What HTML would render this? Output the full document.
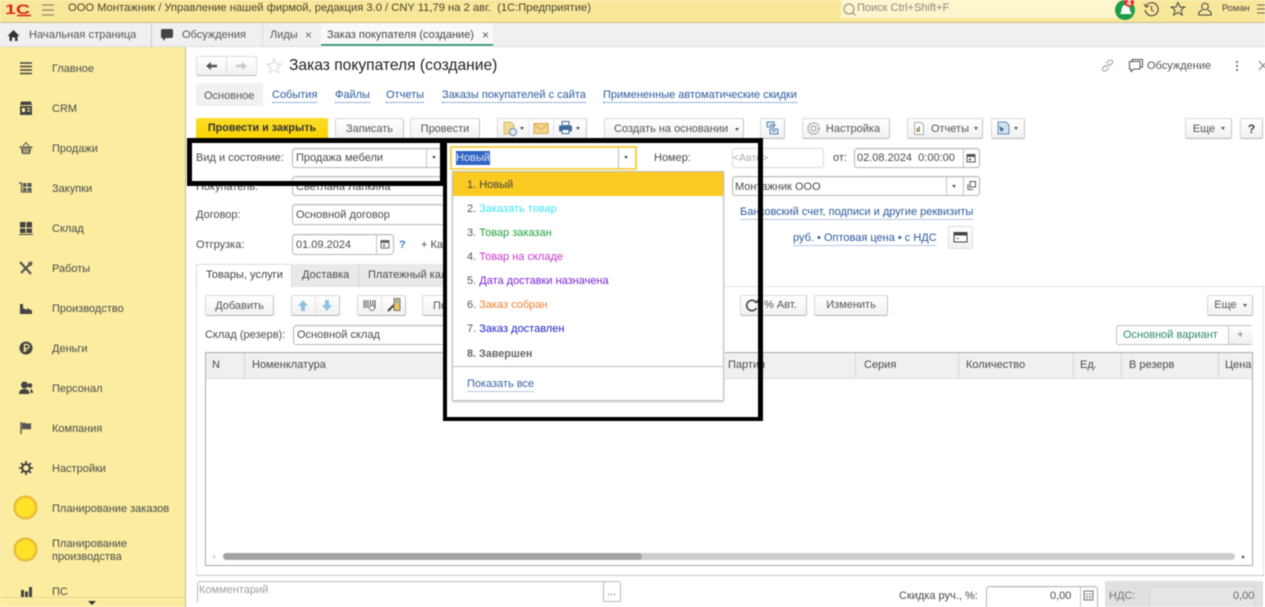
<!DOCTYPE html>
<html lang="ru"><head><meta charset="utf-8"><title>Заказ покупателя</title>
<style>
html,body{margin:0;padding:0;width:1265px;height:607px;overflow:hidden;background:#fff}
body{position:relative;font-family:"Liberation Sans",Arial,sans-serif;font-size:11px;color:#4a4a4a}
#w{position:absolute;left:0;top:0;width:1265px;height:607px;overflow:hidden;filter:blur(.4px)}
.a,.t,.f,.b,svg{position:absolute}
.t{white-space:nowrap;line-height:14px;height:14px;margin-top:1px}
.f{box-sizing:border-box;border:1px solid #b8b8b8;border-radius:3px;background:#fff;box-shadow:inset 0 1px 1px #eee}
.b{box-sizing:border-box;border:1px solid #d8d8d8;border-bottom-color:#b5b5b5;border-right-color:#c4c4c4;border-radius:2px;background:linear-gradient(#fff,#f1f1f1);text-align:center;line-height:20px;color:#555;white-space:nowrap}
.v{position:absolute;width:1px;background:#c4c4c4}
.l{color:#2a5a9e;border-bottom:1px dotted #3a6ab0;height:13px;line-height:13px}
.u{color:#2a5a9e;border-bottom:1px solid #b7c6e0;height:13px;line-height:13px}
.k{position:absolute;background:#000}
.ar{position:absolute;width:0;height:0;border-left:2.5px solid transparent;border-right:2.5px solid transparent;border-top:3px solid #555}
.d{position:absolute;left:467px;white-space:nowrap;line-height:14px;color:#555;margin-top:1px;font-size:11px}
</style></head><body><div id="w">

<!-- top bar -->
<div class="a" style="left:0;top:0;width:1265px;height:22px;background:#f9e799;border-bottom:1px solid #c9bd86"></div>
<svg style="left:4px;top:1px" width="28" height="18"><text x="1" y="13" font-size="14" font-weight="bold" fill="#d8281c" font-family="Liberation Sans" textLength="25" lengthAdjust="spacingAndGlyphs">1С</text><path d="M13 14.500H27" stroke="#d8281c" stroke-width="1.600"/></svg>
<svg style="left:41px;top:3px" width="14" height="14"><path d="M1 2H13M1 7H13M1 12H13" stroke="#8a8a70" stroke-width="1.300"/></svg>
<div class="t" style="left:68px;top:0;font-size:11.200px;color:#45452f">ООО Монтажник / Управление нашей фирмой, редакция 3.0 / CNY 11,79 на 2 авг.&nbsp; (1С:Предприятие)</div>
<div class="a" style="left:841px;top:0;width:278px;height:18px;background:#fdf5cb"></div>
<svg style="left:842px;top:2px" width="15" height="15"><circle cx="7" cy="7" r="5" fill="none" stroke="#888" stroke-width="1"/><path d="M10.500 10.500L13.500 13.500" stroke="#888"/></svg>
<div class="t" style="left:857px;top:0;color:#888">Поиск Ctrl+Shift+F</div>
<svg style="left:1113px;top:-2px" width="28" height="24"><circle cx="12" cy="12" r="10" fill="#1f9e4a"/><path d="M7 16c2-2 1-6 3-8 2-2 5-1 6 1 1 2 1 5 3 7z" fill="#fff"/><circle cx="16" cy="4" r="5" fill="#e2332b"/><text x="13.700" y="7.500" font-size="8" font-weight="bold" fill="#fff" font-family="Liberation Sans">4</text></svg>
<svg style="left:1143px;top:1px" width="17" height="17"><path d="M3 5A6.500 6.500 0 1 1 2.200 9" fill="none" stroke="#444" stroke-width="1.100"/><path d="M1 3L3 6L6 5" fill="none" stroke="#444"/><path d="M8.500 5V9L11 10.500" fill="none" stroke="#444"/></svg>
<svg style="left:1170px;top:1px" width="16" height="16"><path d="M8 1.500L10 6H14.700L11 9L12.300 14L8 11.300L3.700 14L5 9L1.300 6H6Z" fill="none" stroke="#444"/></svg>
<svg style="left:1197px;top:1px" width="17" height="17"><circle cx="8" cy="5.500" r="3.300" fill="none" stroke="#444"/><path d="M1.500 14c0-4 3-4.500 4-5M14.500 14c0-4-3-4.500-4-5M1.500 14H14.500" fill="none" stroke="#444"/></svg>
<div class="t" style="left:1222px;top:0;font-size:9.300px;color:#444">Роман</div>
<svg style="left:1257px;top:3px" width="8" height="12"><path d="M0 2H8M0 6H8M0 10H8" stroke="#666"/></svg>

<!-- tabs -->
<div class="a" style="left:0;top:23px;width:1265px;height:24px;background:#f0f0f0;border-bottom:1px solid #ddd;box-sizing:border-box"></div>
<div class="a" style="left:151px;top:23px;width:1px;height:24px;background:#c9c9c9"></div>
<div class="a" style="left:262px;top:23px;width:1px;height:24px;background:#dcdcdc"></div>
<div class="a" style="left:321px;top:23px;width:172px;height:24px;background:#f9f9f9"></div>
<div class="a" style="left:321px;top:44px;width:172px;height:2px;background:#3f9c78"></div>
<svg style="left:6px;top:28px" width="15" height="15"><path d="M1.500 8L7.500 2L13.500 8H11.500V13H9V9.500H6V13H3.500V8Z" fill="#333"/></svg>
<div class="t" style="left:29px;top:27px;color:#555;font-size:11.100px">Начальная страница</div>
<svg style="left:159px;top:27px" width="16" height="16"><path d="M3 2H13a2 2 0 0 1 1 1V9a2 2 0 0 1-2 2H7L4 14V11H3A1 1 0 0 1 2 10V3Z" fill="#444"/></svg>
<div class="t" style="left:182px;top:27px;color:#555">Обсуждения</div>
<div class="t" style="left:270px;top:27px;color:#555">Лиды</div>
<div class="t" style="left:305px;top:27px;color:#666;font-size:12px">×</div>
<div class="t" style="left:327px;top:27px;color:#444;font-size:11px">Заказ покупателя (создание)</div>
<div class="t" style="left:482px;top:27px;color:#555;font-size:12px">×</div>

<!-- sidebar -->
<div class="a" style="left:0;top:47px;width:185px;height:560px;background:#fbec9f;border-right:1px solid #b9b9a9"></div>
<div class="a" style="left:0;top:597px;width:185px;height:1px;background:#e5d68e"></div>
<div class="a" style="left:88px;top:601px;width:0;height:0;border-left:4px solid transparent;border-right:4px solid transparent;border-top:4px solid #333"></div>
<div class="t" style="left:52px;top:61px">Главное</div>
<div class="t" style="left:52px;top:101px">CRM</div>
<div class="t" style="left:52px;top:141px">Продажи</div>
<div class="t" style="left:52px;top:181px">Закупки</div>
<div class="t" style="left:52px;top:221px">Склад</div>
<div class="t" style="left:52px;top:261px">Работы</div>
<div class="t" style="left:52px;top:301px">Производство</div>
<div class="t" style="left:52px;top:341px">Деньги</div>
<div class="t" style="left:52px;top:381px">Персонал</div>
<div class="t" style="left:52px;top:421px">Компания</div>
<div class="t" style="left:52px;top:461px">Настройки</div>
<div class="t" style="left:52px;top:501px">Планирование заказов</div>
<div class="t" style="left:52px;top:536px">Планирование</div>
<div class="t" style="left:52px;top:549px">производства</div>
<div class="t" style="left:52px;top:584px">ПС</div>
<svg style="left:18px;top:60px" width="16" height="16"><path d="M2 3H14M2 6.500H14M2 10H14M2 13.500H14" stroke="#444" stroke-width="1.600"/></svg>
<svg style="left:18px;top:100px" width="16" height="16"><path d="M3 1.500H13L14 5H2Z" fill="#444"/><rect x="2" y="6" width="12" height="9" fill="#444"/><rect x="4" y="8" width="3" height="4" fill="#fbec9f"/><path d="M9 8.500H12.500M9 11H12.500" stroke="#fbec9f"/></svg>
<svg style="left:18px;top:140px" width="16" height="16"><path d="M1.500 6.500H14.500V8H1.500ZM3 8.500H13L12 14H4Z" fill="#555"/><path d="M5 6L8 2.500L11 6" fill="none" stroke="#555"/><path d="M6 9V13M8 9V13M10 9V13" stroke="#fbec9f"/></svg>
<svg style="left:18px;top:180px" width="16" height="16"><path d="M1 3H3.500V12H14" fill="none" stroke="#555" stroke-width="1.200"/><path d="M5 3H8.500V7H5ZM9.500 3H13.500V7H9.500ZM5 8H8.500V11H5ZM9.500 8H13.500V11H9.500Z" fill="#555"/></svg>
<svg style="left:18px;top:220px" width="16" height="16"><path d="M2 2H7.500V7.500H2ZM8.500 2H14V7.500H8.500ZM2 8.500H7.500V13H2ZM8.500 8.500H14V13H8.500ZM1 14H15V15H1Z" fill="#444"/></svg>
<svg style="left:18px;top:260px" width="16" height="16"><path d="M2 2L8 8.500L13 14M14 2L3 13" stroke="#555" stroke-width="2.200" fill="none"/><path d="M11 1.500l3.500 3.500-2 1-2.500-2.500z" fill="#555"/></svg>
<svg style="left:18px;top:300px" width="16" height="16"><path d="M2 14V4H5V8L9 10V8L14 10.500V14Z" fill="#444"/></svg>
<svg style="left:18px;top:340px" width="16" height="16"><circle cx="8" cy="8" r="6.500" fill="#444"/><path d="M6.500 12V4.500H9a2 2 0 0 1 0 4H5.500M5.500 10.500H9" fill="none" stroke="#fbec9f" stroke-width="1.200"/></svg>
<svg style="left:18px;top:380px" width="16" height="16"><circle cx="6.500" cy="5" r="3.500" fill="#444"/><path d="M1 14c0-4 3-5 5.500-5s5 1 5 5z" fill="#444"/><circle cx="12" cy="5.500" r="2.300" fill="#444"/><path d="M12.500 9c1.500.300 2.500 1.500 2.500 4h-2.500z" fill="#444"/></svg>
<svg style="left:18px;top:420px" width="16" height="16"><path d="M3 2V14" stroke="#555" stroke-width="1.400"/><path d="M4 3c3-1 4 1 7 .500l2-.500V9c-3 1-5-.500-9 .500Z" fill="#555"/></svg>
<svg style="left:18px;top:460px" width="16" height="16"><circle cx="8" cy="8" r="3.800" fill="none" stroke="#444" stroke-width="2"/><path d="M8 1V4M8 12V15M1 8H4M12 8H15M3 3L5 5M11 11L13 13M13 3L11 5M3 13L5 11" stroke="#444" stroke-width="1.800"/></svg>
<div class="a" style="left:14px;top:496px;width:19px;height:19px;border-radius:50%;background:#fee22a;border:2.500px solid #edbf34;box-shadow:0 0 0 .5px #d8ad3a"></div>
<div class="a" style="left:14px;top:538px;width:19px;height:19px;border-radius:50%;background:#fee22a;border:2.500px solid #edbf34;box-shadow:0 0 0 .5px #d8ad3a"></div>
<svg style="left:18px;top:584px" width="16" height="14"><path d="M3 6H6V13H3ZM7 7.500H10V13H7ZM11 3H14V13H11Z" fill="#444"/></svg>

<!-- header -->
<div class="b" style="left:196px;top:56px;width:61px;height:20px;border-color:#ddd;border-bottom-color:#bbb"></div>
<div class="v" style="left:226px;top:57px;height:18px;background:#ddd"></div>
<svg style="left:205px;top:60px" width="14" height="12"><path d="M1 6L6 2V4.700H12V7.300H6V10Z" fill="#555"/></svg>
<svg style="left:234px;top:60px" width="14" height="12"><path d="M13 6L8 2V4.700H2V7.300H8V10Z" fill="#c8c8c8"/></svg>
<svg style="left:265px;top:57px" width="18" height="18"><path d="M9 1.500L11 7H16.500L12 10.500L14 16L9 12.800L4 16L6 10.500L1.500 7H7Z" fill="none" stroke="#d9d9d9"/></svg>
<div class="t" style="left:289px;top:56px;font-size:15.600px;line-height:18px;height:18px;color:#222">Заказ покупателя (создание)</div>
<svg style="left:1100px;top:58px" width="15" height="15"><path d="M6 5L9 2.500a2 2 0 0 1 3 3L9.500 8M9 10L6 12.500a2 2 0 0 1-3-3L5.500 7M5.500 9.500L9.500 5.500" fill="none" stroke="#999"/></svg>
<svg style="left:1128px;top:58px" width="16" height="15"><path d="M4 3.500V1.500H14.500V9H12.500" fill="none" stroke="#555"/><path d="M1.500 3.500H12V11H6L3 13.500V11H1.500Z" fill="#fff" stroke="#555"/></svg>
<div class="t" style="left:1147px;top:58px;color:#555">Обсуждение</div>
<svg style="left:1235px;top:60px" width="4" height="12"><path d="M2 1V3M2 5V7M2 9V11" stroke="#555" stroke-width="1.500"/></svg>
<svg style="left:1258px;top:60px" width="7" height="11"><path d="M1 1L9 10M9 1L1 10" stroke="#777"/></svg>

<!-- form nav -->
<div class="a" style="left:196px;top:83px;width:67px;height:23px;background:#f1f1f1"></div>
<div class="t" style="left:204px;top:88px;color:#555">Основное</div>
<div class="t l" style="left:272px;top:88px">События</div>
<div class="t l" style="left:335px;top:88px">Файлы</div>
<div class="t l" style="left:386px;top:88px">Отчеты</div>
<div class="t l" style="left:442px;top:88px">Заказы покупателей с сайта</div>
<div class="t l" style="left:603px;top:88px">Примененные автоматические скидки</div>

<!-- command bar -->
<div class="b" style="left:196px;top:118px;width:132px;height:21px;background:linear-gradient(#fbdc2c,#fbd400);border:none;border-bottom:1px solid #c9a900;color:#333;font-weight:bold;font-size:10.800px;line-height:21px">Провести и закрыть</div>
<div class="b" style="left:335px;top:118px;width:69px;height:21px">Записать</div>
<div class="b" style="left:410px;top:118px;width:70px;height:21px">Провести</div>
<div class="b" style="left:497px;top:118px;width:90px;height:21px"></div>
<div class="v" style="left:528px;top:119px;height:19px;background:#e2e2e2"></div>
<div class="v" style="left:553px;top:119px;height:19px;background:#e2e2e2"></div>
<svg style="left:502px;top:120px" width="18" height="17"><path d="M2 2H9L12 5V14H2Z" fill="#f1dc95" stroke="#d0b870"/><circle cx="11" cy="12" r="3.500" fill="#dfe7ef" stroke="#6c8fb5"/></svg>
<div class="ar" style="left:520px;top:127px"></div>
<svg style="left:533px;top:122px" width="16" height="13"><rect x="1" y="1.500" width="14" height="10" fill="#f6d48a" stroke="#d8a656"/><path d="M1 2L8 8L15 2" fill="none" stroke="#d8a656"/></svg>
<svg style="left:558px;top:120px" width="15" height="16"><rect x="4" y="1.500" width="7" height="4" fill="#fff" stroke="#3f6c9b"/><rect x="1" y="5.500" width="13" height="6" rx="1" fill="#3f6c9b"/><rect x="4" y="9.500" width="7" height="4" fill="#fff" stroke="#3f6c9b"/></svg>
<div class="ar" style="left:576px;top:127px"></div>
<div class="b" style="left:604px;top:118px;width:140px;height:21px;text-align:left;padding-left:9px">Создать на основании<span class="ar" style="left:130px;top:9px"></span></div>
<div class="b" style="left:760px;top:118px;width:25px;height:21px"></div>
<svg style="left:765px;top:120px" width="15" height="16"><path d="M2 2H9V7H2ZM5 9H13V14H5Z" fill="#dbe8f2" stroke="#5587ab"/><path d="M5 5H11M7 11H11" stroke="#5587ab"/></svg>
<div class="b" style="left:802px;top:118px;width:88px;height:21px;padding-left:14px">Настройка</div>
<svg style="left:806px;top:121px" width="15" height="15"><circle cx="7.500" cy="7.500" r="5.500" fill="none" stroke="#999" stroke-width="1.500" stroke-dasharray="2 1"/><circle cx="7.500" cy="7.500" r="2.500" fill="none" stroke="#999"/></svg>
<div class="b" style="left:907px;top:118px;width:76px;height:21px;padding-left:16px;padding-right:6px">Отчеты</div>
<div class="ar" style="left:974px;top:127px"></div>
<svg style="left:913px;top:121px" width="12" height="15"><path d="M1.500 1.500H8L10.500 4V13.500H1.500Z" fill="#fff" stroke="#aaa"/><path d="M3.500 7H5V11H3.500Z" fill="#d55"/><path d="M5.500 5.500H7V11H5.500Z" fill="#5a5"/></svg>
<div class="b" style="left:991px;top:118px;width:34px;height:21px"></div>
<svg style="left:996px;top:120px" width="15" height="16"><path d="M2 2H10L13 5V14H2Z" fill="#cfe0ee" stroke="#6c8fb5"/><path d="M3 6L8 9L5 12" fill="#3d6b95"/></svg>
<div class="ar" style="left:1014px;top:127px"></div>
<div class="b" style="left:1185px;top:118px;width:47px;height:21px;padding-right:9px">Еще</div>
<div class="ar" style="left:1221px;top:127px"></div>
<div class="b" style="left:1240px;top:118px;width:23px;height:21px;font-weight:bold;font-size:12px;color:#444">?</div>

<!-- form left -->
<div class="t" style="left:196px;top:150px">Вид и состояние:</div>
<div class="f" style="left:292px;top:148px;width:152px;height:20px"></div>
<div class="v" style="left:426px;top:149px;height:18px"></div>
<div class="ar" style="left:432px;top:156px"></div>
<div class="t" style="left:296px;top:150px">Продажа мебели</div>
<div class="t" style="left:196px;top:179px">Покупатель:</div>
<div class="f" style="left:292px;top:176px;width:160px;height:20px"></div>
<div class="t" style="left:296px;top:179px">Светлана Лапкина</div>
<div class="t" style="left:196px;top:207px">Договор:</div>
<div class="f" style="left:292px;top:204px;width:160px;height:21px"></div>
<div class="t" style="left:296px;top:207px">Основной договор</div>
<div class="t" style="left:196px;top:237px">Отгрузка:</div>
<div class="f" style="left:292px;top:234px;width:102px;height:21px"></div>
<div class="v" style="left:376px;top:235px;height:19px"></div>
<svg style="left:380px;top:239px" width="10" height="10"><rect x="1" y="1.500" width="8" height="7.500" fill="none" stroke="#666"/><rect x="1" y="1.500" width="8" height="2.500" fill="#666"/><rect x="3" y="5.500" width="2" height="2" fill="#666"/></svg>
<div class="t" style="left:296px;top:237px">01.09.2024</div>
<div class="t" style="left:399px;top:237px;color:#3c7fc2;font-weight:bold">?</div>
<div class="t" style="left:421px;top:237px">+ Ка</div>

<!-- tab strip -->
<div class="a" style="left:292px;top:264px;width:175px;height:22px;background:#e9e9e9"></div>
<div class="a" style="left:358px;top:264px;width:1px;height:22px;background:#d5d5d5"></div>
<div class="a" style="left:196px;top:264px;width:96px;height:23px;background:#fff;border:1px solid #ddd;border-bottom:none;box-sizing:border-box"></div>
<div class="a" style="left:292px;top:286px;width:973px;height:1px;background:#e3e3e3"></div>
<div class="a" style="left:196px;top:287px;width:1px;height:288px;background:#e3e3e3"></div>
<div class="a" style="left:1263px;top:286px;width:1px;height:290px;background:#e3e3e3"></div>
<div class="a" style="left:196px;top:575px;width:1068px;height:1px;background:#c8c8c8"></div>
<div class="t" style="left:206px;top:267px;color:#444">Товары, услуги</div>
<div class="t" style="left:302px;top:267px">Доставка</div>
<div class="t" style="left:368px;top:267px">Платежный календарь</div>

<!-- table commands -->
<div class="b" style="left:205px;top:295px;width:69px;height:21px">Добавить</div>
<div class="b" style="left:291px;top:295px;width:49px;height:21px"></div>
<div class="v" style="left:315px;top:296px;height:19px;background:#e4e4e4"></div>
<svg style="left:297px;top:299px" width="12" height="13"><path d="M6 1L11 7H8V12H4V7H1Z" fill="#8cc0e5"/></svg>
<svg style="left:321px;top:299px" width="12" height="13"><path d="M6 12L11 6H8V1H4V6H1Z" fill="#8cc0e5"/></svg>
<div class="b" style="left:357px;top:295px;width:49px;height:21px"></div>
<div class="v" style="left:381px;top:296px;height:19px;background:#e4e4e4"></div>
<svg style="left:362px;top:298px" width="15" height="15"><path d="M2 2V10M4 2V10M6 2V10M8.500 2V10M11 2V10M13 2V10" stroke="#555"/><circle cx="10" cy="10" r="2.500" fill="#fff" stroke="#777"/></svg>
<svg style="left:386px;top:297px" width="16" height="16"><path d="M2 14L8 8" stroke="#444" stroke-width="2"/><rect x="8" y="1.500" width="6" height="12" fill="#e9c35a" stroke="#777"/><rect x="9.500" y="3" width="3" height="3" fill="#7fb3d8"/></svg>
<div class="b" style="left:422px;top:295px;width:60px;height:21px;text-align:left;padding-left:10px">По</div>
<div class="t" style="left:205px;top:327px">Склад (резерв):</div>
<div class="f" style="left:293px;top:325px;width:170px;height:20px"></div>
<div class="t" style="left:297px;top:327px">Основной склад</div>
<div class="b" style="left:740px;top:295px;width:67px;height:21px"></div>
<svg style="left:744px;top:298px" width="15" height="15"><path d="M12.500 5A5.200 5.200 0 1 0 12.500 10" fill="none" stroke="#555" stroke-width="1.800"/><path d="M10 5H14V1.500Z" fill="#555"/></svg>
<div class="t" style="left:764px;top:297px;color:#555">% Авт.</div>
<div class="b" style="left:814px;top:295px;width:74px;height:21px;line-height:18px">Изменить</div>
<div class="b" style="left:1207px;top:295px;width:46px;height:21px;padding-right:9px;line-height:18px">Еще</div>
<div class="ar" style="left:1243px;top:304px"></div>
<div class="f" style="left:1116px;top:325px;width:137px;height:20px;border-color:#c0c0c0;background:#fff;box-shadow:none"></div>
<div class="a" style="left:1228px;top:326px;width:24px;height:18px;background:linear-gradient(#fff,#efefef);border-left:1px solid #c8c8c8"></div>
<div class="t" style="left:1123px;top:327px;color:#2f8a60">Основной вариант</div>
<div class="t" style="left:1237px;top:327px;color:#777">+</div>

<!-- table -->
<div class="a" style="left:205px;top:352px;width:1048px;height:214px;border:1px solid #aaa;box-sizing:border-box;background:#fff"></div>
<div class="a" style="left:206px;top:353px;width:1046px;height:25px;background:#f0f0f0;border-bottom:1px solid #ddd"></div>
<div class="v" style="left:244px;top:353px;height:25px;background:#d5d5d5"></div>
<div class="v" style="left:855px;top:353px;height:25px;background:#d5d5d5"></div>
<div class="v" style="left:958px;top:353px;height:25px;background:#d5d5d5"></div>
<div class="v" style="left:1073px;top:353px;height:25px;background:#d5d5d5"></div>
<div class="v" style="left:1121px;top:353px;height:25px;background:#d5d5d5"></div>
<div class="v" style="left:1218px;top:353px;height:25px;background:#d5d5d5"></div>
<div class="t" style="left:212px;top:357px">N</div>
<div class="t" style="left:252px;top:357px">Номенклатура</div>
<div class="t" style="left:728px;top:357px">Партия</div>
<div class="t" style="left:864px;top:357px">Серия</div>
<div class="t" style="left:966px;top:357px">Количество</div>
<div class="t" style="left:1080px;top:357px">Ед.</div>
<div class="t" style="left:1129px;top:357px">В резерв</div>
<div class="a" style="left:1225px;top:358px;width:27px;height:14px;overflow:hidden;line-height:14px">Цена</div>
<div class="a" style="left:223px;top:553px;width:1012px;height:7px;border-radius:4px;background:#cdcdcd"></div>
<div class="a" style="left:223px;top:553px;width:419px;height:7px;border-radius:4px;background:#a3a3a3"></div>
<div class="a" style="left:212px;top:555px;width:0;height:0;border-top:2.500px solid transparent;border-bottom:2.500px solid transparent;border-right:3px solid #ccc"></div>
<div class="a" style="left:1242px;top:555px;width:0;height:0;border-top:2.500px solid transparent;border-bottom:2.500px solid transparent;border-left:3px solid #555"></div>

<!-- footer -->
<div class="f" style="left:197px;top:581px;width:424px;height:21px;border-bottom:none;border-radius:3px 3px 0 0;box-shadow:none"></div>
<div class="v" style="left:603px;top:582px;height:20px;background:#bbb"></div>
<div class="a" style="left:603px;top:601px;width:18px;height:1px;background:#bbb"></div>
<div class="t" style="left:199px;top:582px;color:#a0a0a0">Комментарий</div>
<div class="t" style="left:607px;top:584px;color:#666">...</div>
<div class="t" style="left:899px;top:588px">Скидка руч., %:</div>
<div class="f" style="left:986px;top:586px;width:112px;height:30px"></div>
<div class="v" style="left:1080px;top:587px;height:20px"></div>
<div class="t" style="left:1050px;top:588px">0,00</div>
<svg style="left:1083px;top:590px" width="11" height="11"><rect x="1" y="1" width="9" height="9" fill="none" stroke="#777"/><path d="M1 4H10M4 4V10M7 4V10M1 7H10" stroke="#999" stroke-width=".7"/></svg>
<div class="a" style="left:1105px;top:581px;width:158px;height:26px;background:#e0e0e0"></div>
<div class="a" style="left:1149px;top:586px;width:106px;height:21px;background:#e6e6e6;border-left:1px solid #d5d5d5;border-top:1px solid #d5d5d5;border-right:1px solid #d5d5d5;box-sizing:border-box"></div>
<div class="t" style="left:1109px;top:588px;color:#777">НДС:</div>
<div class="t" style="left:1233px;top:588px;color:#666">0,00</div>

<!-- dropdown field -->
<div class="a" style="left:447px;top:143px;width:278px;height:274px;background:#fff"></div>

<!-- form right -->
<div class="t" style="left:654px;top:150px">Номер:</div>
<div class="f" style="left:732px;top:148px;width:92px;height:20px;border-color:#d8d8d8;box-shadow:none"></div>
<div class="t" style="left:733px;top:150px;color:#aaa;font-size:10.500px">&lt;Авто&gt;</div>
<div class="t" style="left:833px;top:150px">от:</div>
<div class="f" style="left:854px;top:148px;width:126px;height:20px"></div>
<div class="v" style="left:963px;top:149px;height:18px"></div>
<svg style="left:966px;top:153px" width="10" height="10"><rect x="1" y="1.500" width="8" height="7.500" fill="none" stroke="#555"/><rect x="1" y="1.500" width="8" height="2.500" fill="#555"/><rect x="3" y="5.500" width="2" height="2" fill="#555"/></svg>
<div class="t" style="left:857px;top:150px">02.08.2024&nbsp; 0:00:00</div>
<div class="f" style="left:732px;top:176px;width:248px;height:20px"></div>
<div class="v" style="left:946px;top:177px;height:18px"></div>
<div class="v" style="left:963px;top:177px;height:18px"></div>
<div class="ar" style="left:952px;top:185px"></div>
<svg style="left:966px;top:180px" width="11" height="11"><path d="M4 1.500H9.500V7H4Z" fill="none" stroke="#555"/><path d="M2 4V9.500H7" fill="none" stroke="#555"/></svg>
<div class="t" style="left:735px;top:179px">Монтажник ООО</div>
<div class="t u" style="left:740px;top:205px">Банковский счет, подписи и другие реквизиты</div>
<div class="t u" style="left:793px;top:231px">руб. • Оптовая цена • с НДС</div>
<div class="b" style="left:948px;top:226px;width:25px;height:23px;border-color:#ddd"></div>
<svg style="left:952px;top:231px" width="17" height="12"><rect x="2" y="1.500" width="13" height="9.500" fill="#fff" stroke="#444"/><rect x="2" y="1.500" width="13" height="3" fill="#444"/><path d="M4 7.500H7" stroke="#777"/></svg>

<div class="a" style="left:450px;top:146px;width:187px;height:24px;box-sizing:border-box;border:2px solid #f6d04d;background:#fff"></div>
<div class="a" style="left:456px;top:151px;width:34px;height:14px;background:#3165c5"></div>
<div class="t" style="left:456px;top:150px;color:#dfe6f5">Новый</div>
<div class="v" style="left:618px;top:148px;height:20px;background:#bbb"></div>
<div class="ar" style="left:624px;top:156px"></div>

<!-- dropdown list -->
<div class="a" style="left:452px;top:171px;width:272px;height:230px;box-sizing:border-box;border:1px solid #bdbdbd;background:#fff;box-shadow:0 1px 2px #ccc"></div>
<div class="a" style="left:453px;top:172px;width:270px;height:24px;background:#fbcb22"></div>
<div class="d" style="top:177px;color:#444">1. Новый</div>
<div class="d" style="top:201px">2. <span style="color:#3fe6ee">Заказать товар</span></div>
<div class="d" style="top:225px">3. <span style="color:#1fa03c">Товар заказан</span></div>
<div class="d" style="top:249px">4. <span style="color:#c836c8">Товар на складе</span></div>
<div class="d" style="top:273px">5. <span style="color:#7a22d8">Дата доставки назначена</span></div>
<div class="d" style="top:297px">6. <span style="color:#ee7f2c">Заказ собран</span></div>
<div class="d" style="top:321px">7. <span style="color:#1c1cc8">Заказ доставлен</span></div>
<div class="d" style="top:346px;color:#666;font-weight:bold;font-size:10.800px">8. Завершен</div>
<div class="a" style="left:453px;top:366px;width:270px;height:1px;background:#bdbdbd"></div>
<div class="d u" style="top:377px;height:13px;line-height:13px;color:#3a62a8">Показать все</div>

<!-- black frames -->
<div class="k" style="left:187px;top:138px;width:576px;height:5px"></div>
<div class="k" style="left:187px;top:138px;width:5px;height:48px"></div>
<div class="k" style="left:187px;top:181px;width:258px;height:5px"></div>
<div class="k" style="left:440px;top:138px;width:5px;height:48px"></div>
<div class="k" style="left:443px;top:138px;width:4px;height:283px"></div>
<div class="k" style="left:758px;top:138px;width:5px;height:283px"></div>
<div class="k" style="left:443px;top:417px;width:320px;height:4px"></div>
</div></body></html>
